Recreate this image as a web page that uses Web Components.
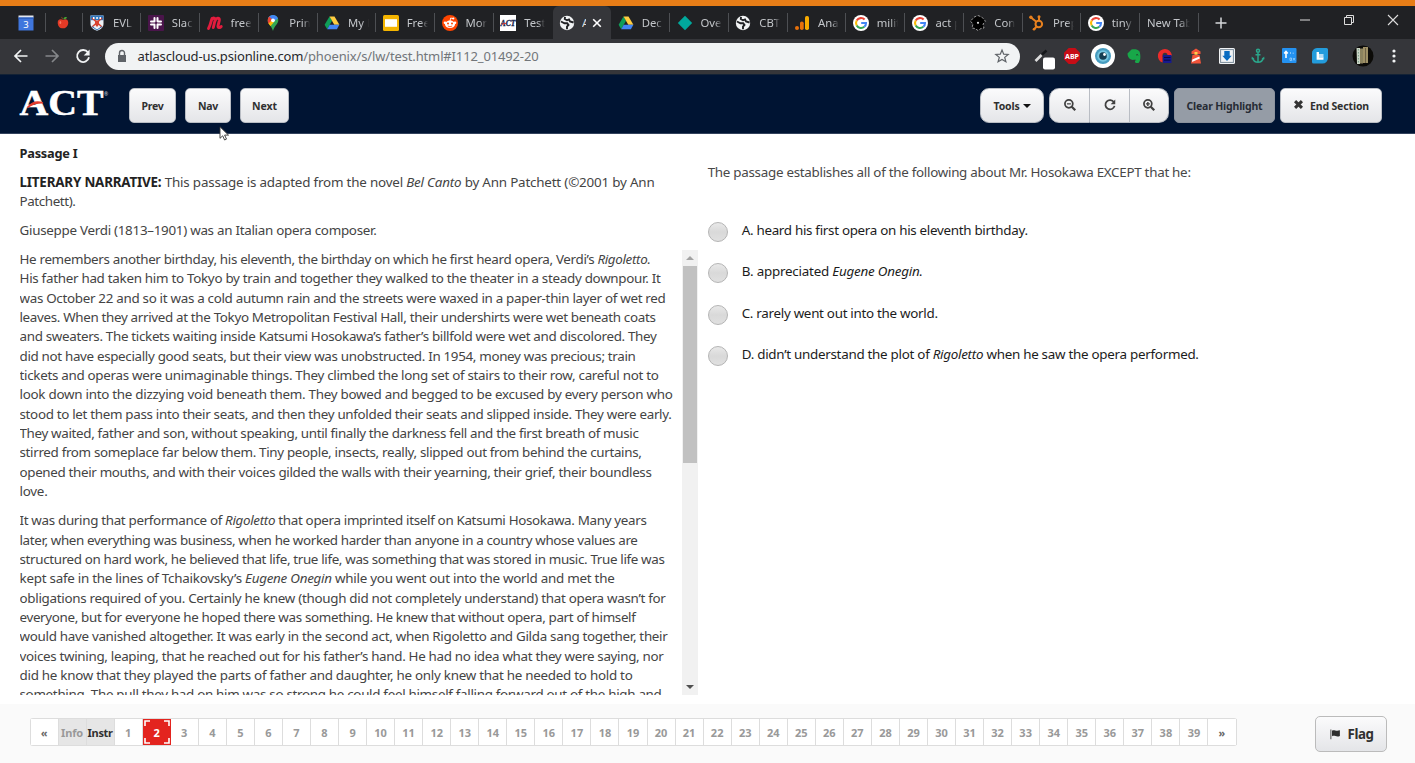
<!DOCTYPE html>
<html lang="en">
<head>
<meta charset="utf-8">
<title>ACT Test</title>
<style>
html,body{margin:0;height:100%;overflow:hidden;background:#fff;font-family:"Noto Sans","Open Sans",sans-serif}
</style>
</head>
<body>
<exam-window></exam-window>
<script>
const define=(name,html,init)=>{
  const t=document.createElement('template');
  t.innerHTML=html;
  customElements.define(name,class extends HTMLElement{
    connectedCallback(){
      if(this.shadowRoot)return;
      this.attachShadow({mode:'open'}).append(t.content.cloneNode(true));
      if(init)init(this,this.shadowRoot);
    }
  });
};

/* A single line of text, tracked to fill the width in its "w" attribute. */
define('text-line',`<style>:host{display:block;white-space:nowrap}span{display:inline-block}</style><span><slot></slot></span>`,(el,r)=>{
  const w=+el.getAttribute('w');
  if(!w)return;
  const s=r.querySelector('span'),n=el.textContent.length;
  s.style.letterSpacing=((w-s.getBoundingClientRect().width)/n).toFixed(4)+'px';
});

const globe='<circle cx="8" cy="8" r="7.2" fill="#f1f3f4"/><path d="M2 6.5 5.5 8.3 8.2 8.3 9.5 10 8 11.7 8 14.2M6 1.8 5.8 4 8 5.3 10 4.4 11 6.4 14.6 7.5" fill="none" stroke="#202124" stroke-width="1.9"/>';
const goog='<circle cx="8" cy="8" r="8" fill="#fff"/><g fill="none" stroke-width="2.1"><path d="M11.6 4.6A5 5 0 0 0 3.7 5.5" stroke="#ea4335"/><path d="M3.7 5.5A5 5 0 0 0 3.7 10.5" stroke="#fbbc05"/><path d="M3.7 10.5A5 5 0 0 0 11.3 11.8" stroke="#34a853"/><path d="M11.3 11.8A5 5 0 0 0 13 8H8.2" stroke="#4285f4"/></g>';
const drive='<path d="M5.5 1.5 8 5.8 3.2 14.2.6 9.8z" fill="#0f9d58"/><path d="M5.5 1.5H10.5L15.4 9.8H10.3z" fill="#ffcd40"/><path d="M5.7 9.8H15.4L12.9 14.2H3.2z" fill="#4285f4"/>';
const ICONS={
 cal:'<path d="M.5 2h15v13.5H.5z" fill="#3f76dd"/><path d="M.5.5h15v2H.5z" fill="#e2e7ef"/><path d="M.5 2.5h15v1.3H.5z" fill="#2a5bb8"/><text x="8" y="12.6" font-size="9.5" fill="#fff" text-anchor="middle" font-family="Noto Sans">3</text>',
 apple:'<path d="M8 5C4.5 3.3 1.5 5 2 9c.4 3.8 3.3 6.5 6 5.5 3 .8 6-2.6 6-6.200C14 4.500 11 3.500 8 5z" fill="#e33a26"/><path d="M8.200 5.200C8 3.500 7 2.500 6 2" stroke="#70401f" fill="none" stroke-width="1.200"/><path d="M8.500 4C9 2 11 1.300 12.500 2.200 11.800 4 10 4.500 8.500 4z" fill="#46a335"/><ellipse cx="5" cy="8" rx="1" ry="1.800" fill="#f77a62"/>',
 crest:'<path d="M1.500.5h13v8.500c0 3.500-3 5.500-6.500 6.700C4.500 14.500 1.500 12.500 1.500 9z" fill="#eef1f5"/><path d="M1.500.5h13v4.700h-13z" fill="#2f75bd"/><path d="m3 3 10 9M13 3 3 12" stroke="#d9432f" stroke-width="1.500"/><path d="M6 5.500h4v4L8 12 6 9.500z" fill="#d9432f"/><path d="M4 2h1.500v2H4zM7.300 2h1.500v2H7.300zM10.500 2H12v2h-1.500z" fill="#fff"/><path d="M3 11.500 8 15l5-3.500" fill="none" stroke="#2f75bd"/>',
 slack:'<rect width="16" height="16" rx="1" fill="#4a154b"/><g stroke="#fff" stroke-width="2" stroke-linecap="round"><path d="M6.500 3v3.500M9.500 3v3.200M6.500 9.700V13M9.500 9.500V13M3 6.500h3.200M9.700 6.500H13M3 9.500h3.500M9.700 9.500H13"/></g>',
 m:'<path d="M1.500 13.500C3.500 10 4 6 5 3.500M5.200 4C6 2.500 8.500 2.500 8 5.500L6.300 12.500M8 6C9 2.500 13 2 12.300 5.500L11 11c-.3 2 2 2 3.200.5" fill="none" stroke="#e31c3e" stroke-width="2.900" stroke-linecap="round"/>',
 pin:'<path d="M8 0a5.300 5.300 0 0 1 5.300 5.300C13.300 9 9.200 11 8 16 6.800 11 2.700 9 2.700 5.300A5.300 5.300 0 0 1 8 0z" fill="#34a853"/><path d="M8 0a5.300 5.300 0 0 1 5 3.500L8 7 3 3.500A5.300 5.300 0 0 1 8 0z" fill="#4285f4"/><path d="M4.300 1.500 8 5.300 4.200 9.500C3 8 2.700 7 2.700 5.300a5.300 5.300 0 0 1 1.600-3.800z" fill="#ea4335"/><path d="M3.500 8.500 7 5l2 2-3.500 4.300z" fill="#fbbc04"/><circle cx="8" cy="5.300" r="1.900" fill="#fff"/>',
 drive,globe,goog,
 slides:'<rect width="16" height="16" rx="1.500" fill="#f4b400"/><path d="M2 4.200h12v7.600H2z" fill="#fff"/>',
 reddit:'<circle cx="8" cy="8" r="8" fill="#ff4500"/><ellipse cx="8" cy="9.300" rx="5" ry="3.700" fill="#fff"/><circle cx="3" cy="7.700" r="1.300" fill="#fff"/><circle cx="13" cy="7.700" r="1.300" fill="#fff"/><path d="m8 6 .7-3 2.300.6" stroke="#fff" fill="none" stroke-width=".9"/><circle cx="11.300" cy="3.500" r="1.100" fill="#fff"/><circle cx="6" cy="8.600" r="1" fill="#ff4500"/><circle cx="10" cy="8.600" r="1" fill="#ff4500"/><path d="M5.800 11q2.200 1.500 4.400 0" stroke="#ff4500" fill="none" stroke-width=".8"/>',
 act:'<rect width="16" height="16" fill="#fff"/><text x=".6" y="10.600" font-size="7.500" font-weight="bold" font-style="italic" font-family="Liberation Serif" fill="#17254c" stroke="#17254c" stroke-width=".3" textLength="14.800" lengthAdjust="spacingAndGlyphs">ACT</text><path d="M2 9.500q2-1.700 4-1" stroke="#d33" fill="none"/>',
 diamond:'<path d="M8 .8 15.200 8 8 15.200.8 8z" fill="#00a99d"/>',
 bars:'<circle cx="3" cy="13" r="2" fill="#e8710a"/><rect x="6" y="6.500" width="3.700" height="8.500" rx="1.800" fill="#e8710a"/><rect x="11" y="1" width="4" height="14" rx="1.700" fill="#f9ab00"/>',
 college:'<path d="m8 .5 4 1.700 3.500 4L13 9l1 4-3 .5L8 15.500 5 13.500 2 13l1-4L.5 6.200l3.500-4z" fill="#000" stroke="#bbb" stroke-width=".8" stroke-dasharray="2.500 1.500"/><circle cx="8" cy="7.800" r="1.100" fill="#ddd"/>',
 hub:'<g fill="none" stroke="#e8811f" stroke-width="2"><circle cx="9.800" cy="9" r="3.300"/><path d="M10 5.500V2M7.300 6.800 2 2.500M7.500 11.500 5 14.500"/></g><g fill="#e8811f"><circle cx="10" cy="1.800" r="1.500"/><circle cx="1.900" cy="2.200" r="1.700"/><circle cx="5" cy="14.300" r="1.300"/></g>',
 close:'<path d="m4.200 4.200 7.600 7.600M11.800 4.200l-7.600 7.600" stroke="#fff" stroke-width="1.600"/>',
 plus:'<path d="M8 2.500v11M2.500 8h11" stroke="#d5d7da" stroke-width="1.500"/>',
 min:'<path d="M3 8h10" stroke="#ddd"/>',
 max:'<path d="M3.500 5.500h7v7h-7zM5.500 5.500v-2h7v7h-2" fill="none" stroke="#ddd"/>',
 x:'<path d="m3 3 10 10M13 3 3 13" stroke="#ddd" stroke-width="1.100"/>',
 back:'<path d="M14.500 8H2.500M8 2 2 8l6 6" fill="none" stroke="#f1f3f4" stroke-width="1.700"/>',
 fwd:'<path d="M1.500 8h12M8 2l6 6-6 6" fill="none" stroke="#85878a" stroke-width="1.700"/>',
 reload:'<path d="M13 4.500A6 6 0 1 0 14 9.300" fill="none" stroke="#f1f3f4" stroke-width="1.800"/><path d="M14.600 1.500v6H8.700z" fill="#f1f3f4"/>',
 lock:'<path d="M4 7h8v7H4z" fill="#5f6368"/><path d="M5.500 7V5a2.500 2.500 0 0 1 5 0v2" fill="none" stroke="#5f6368" stroke-width="1.400"/>',
 star:'<path d="m8 2 1.700 4.200 4.500.3-3.500 2.900 1.200 4.400L8 11.400l-3.900 2.400 1.200-4.400L1.800 6.500l4.500-.3z" fill="none" stroke="#5f6368" stroke-width="1.200"/>',
 pick:'<path d="m2.500 13 6-6" stroke="#ddd" stroke-width="2.600"/><path d="m9 6.500 4.500-4" stroke="#15171a" stroke-width="2.500"/><rect x="10" y="9.500" width="12" height="12" rx="2" fill="#fff"/>',
 abp:'<path d="M4.700 0h6.600L16 4.700v6.600L11.300 16H4.700L0 11.300V4.700z" fill="#c70d16"/><text x="8" y="10.800" text-anchor="middle" font-size="7.600" font-weight="bold" font-family="Noto Sans" fill="#fff" textLength="14" lengthAdjust="spacingAndGlyphs">ABP</text>',
 eye:'<circle cx="8" cy="8" r="12" fill="#fff"/><circle cx="8" cy="8" r="8" fill="#469cc0"/><circle cx="8" cy="8" r="5.800" fill="#76c5df"/><circle cx="8" cy="8" r="3.800" fill="#173d52"/><circle cx="9.500" cy="6.500" r="1.400" fill="#fff"/>',
 ever:'<path d="M1.500 5.500 5.500 1.500C8.500 1 12 1.300 13.500 3.500c1.500 4 1 10-1 11.500H9.800c-1.500-1-1-3 .7-3l.5.9c-1.800-2.400-3.500 0-6-1.400C2.500 10.500 1.500 8 1.500 5.500z" fill="#18a849"/><path d="M10.200 7q1-1 2 .3" fill="none" stroke="#26332c"/>',
 red:'<path d="M14.800 7A7 7 0 1 0 5.500 14.500V8h9z" fill="#ed2b2b"/><circle cx="8" cy="7.200" r="2.500" fill="#35363a"/><path d="M6 7h8.500v8H6z" fill="#171a8e"/><path d="M7 9.500h6.500M7 12.200h6.500" stroke="#080a43"/>',
 house:'<path d="m8 .5 4.500 3V6h-9V3.500z" fill="#f2543a"/><path d="M4.500 6.700h7L13 15.500H3z" fill="#f2543a"/><path d="m4.300 11.500 7-3 .5 2-7.800 3.500z" fill="#fff"/><path d="M6.500 4h3v2.700h-3z" fill="#ffd04a"/>',
 down:'<rect width="16" height="16" rx="1.500" fill="#f1f3f5"/><rect x="1.600" y="1.600" width="12.800" height="12.800" fill="none" stroke="#7b8c9b"/><path d="M5.300 3h5.400v4.700h2L8 13 3.300 7.700h2z" fill="#086bc1"/>',
 anchor:'<g fill="none" stroke="#2ba68b" stroke-width="1.500"><circle cx="8" cy="2.700" r="1.500"/><path d="M8 4.500V14.500M5.500 6.700h5M2.700 10c.7 3 2.700 4.300 5.300 4.300s4.600-1.300 5.300-4.300"/></g><path d="M1.800 8.500 4.800 11.200H1.500zM14.200 8.500 11.200 11.200h3.300z" fill="#2ba68b"/>',
 ext:'<rect x="1" width="14.500" height="15" rx="1" fill="#2492f1"/><path d="M5 10V4M3.200 5.500 5 3.500l1.800 2" fill="none" stroke="#fff" stroke-width="1.600"/><path d="M9.500 4v2M11.500 5.200h1.500M9 10h1.500v2.500H9zM12 10l2 2.500m0-2.500-2 2.500" stroke="#9ed1fb" stroke-width=".8" fill="none"/>',
 blue:'<path d="M5 0h9.500A1.500 1.500 0 0 1 16 1.500V10a5.500 5.500 0 0 1-5.500 5.500H1.500A1.500 1.500 0 0 1 0 14V5.500A5 5 0 0 1 5 0z" fill="#239cdc"/><path d="M5.800 4v6.500H11.500" stroke="#fff" stroke-width="2.400" fill="none"/><path d="M7 6h4.500v3.500H7z" fill="#b6def4"/>',
 face:'<circle cx="8" cy="8" r="10.500" fill="#0c0b08"/><path d="M1.500 0H5v16H2z" fill="#c9d3c3"/><path d="M5 .5h3v15H5z" fill="#8c835f"/><path d="M8-1h5v16H8z" fill="#9f9167"/><path d="M10.500 0v15" stroke="#6c6045"/><path d="M3.400 1v14" stroke="#7c9d88" stroke-dasharray="1.500 1.500"/>',
 dots:'<g fill="#f1f3f4"><circle cx="8" cy="3" r="1.600"/><circle cx="8" cy="8" r="1.600"/><circle cx="8" cy="13" r="1.600"/></g>',
 zout:'<circle cx="6.700" cy="6.700" r="4.500" fill="none" stroke="#404040" stroke-width="2"/><path d="m10 10 4 4" stroke="#404040" stroke-width="2.600"/><path d="M4.500 6.700H9" stroke="#404040" stroke-width="1.400"/>',
 zin:'<circle cx="6.700" cy="6.700" r="4.500" fill="none" stroke="#404040" stroke-width="2"/><path d="m10 10 4 4" stroke="#404040" stroke-width="2.600"/><path d="M4.500 6.700H9M6.700 4.500V9" stroke="#404040" stroke-width="1.600"/>',
 redo:'<path d="M12.500 4.800A5.300 5.300 0 1 0 13.200 9" fill="none" stroke="#404040" stroke-width="2"/><path d="M14 1.800V7H8.800z" fill="#404040"/>',
 cross:'<path d="m3 3 10 10M13 3 3 13" stroke="#333" stroke-width="4.400"/>',
 flag:'<path d="M2.500 2v13" stroke="#555" stroke-width="1.400"/><path d="M4 3.500c3-2 5 1.500 10.500-.5v7.500c-4.500 2.500-7-1.500-10.500.5z" fill="#2d2d2d"/>'
};
define('app-icon',`<style>:host{display:block;width:16px;height:16px;flex:none}svg{display:block;width:100%;height:100%;overflow:visible}</style><svg viewBox="0 0 16 16"></svg>`,(el,r)=>{
  r.querySelector('svg').innerHTML=ICONS[el.getAttribute('name')];
});

define('browser-tab',`<style>
:host{display:flex;align-items:center;box-sizing:border-box;flex:none;width:58.750px;height:33px;padding-left:6.500px;position:relative;color:#c3c6ca;font-size:11.300px}
:host([pinned]){width:36.500px}
:host([plain]){padding-left:7px}
:host::after{content:"";position:absolute;right:0;top:7px;width:1px;height:19px;background:#4d4f53}
:host([active]){background:#35363a;border-radius:6px 6px 0 0;color:#ddd}
:host([active])::after,:host([before])::after{display:none}
.l{width:21px;margin-left:8px;margin-top:-1px;overflow:hidden;white-space:nowrap;-webkit-mask:linear-gradient(90deg,#000 65%,transparent)}
:host([plain]) .l{width:43px;margin-left:0;-webkit-mask:linear-gradient(90deg,#000 75%,transparent)}
:host([active]) .l{width:4px;margin-left:7px;-webkit-mask:none}
:host([pinned]) .l{display:none}
</style><slot name="icon"></slot><div class="l"><slot></slot></div><slot name="end"></slot>`);

const tabs=[['crest','EVL'],['slack','Slack'],['m','free'],['pin','Print'],['drive','My D'],['slides','Free'],['reddit','Mor'],['act','Test','before'],['globe','A','active'],['drive','Dec'],['diamond','Ove'],['globe','CBT'],['bars','Ana'],['goog','milit'],['goog','act p'],['college','Con'],['hub','Prep'],['goog','tiny']];
define('tab-strip',`<style>:host{display:flex;height:33px;background:#202124;border-top:6px solid #e77d17;padding-left:9.500px;align-items:center}
.plus{margin-left:14px}.win{margin-left:auto;display:flex;gap:28px;padding-right:14px;margin-top:-5px}</style>
<browser-tab pinned style="padding-left:8.500px"><app-icon slot="icon" name="cal"></app-icon></browser-tab><browser-tab pinned style="padding-left:9.500px"><app-icon slot="icon" name="apple" style="width:14px;height:15px"></app-icon></browser-tab>
${tabs.map(([i,t,f])=>`<browser-tab ${f||''}><app-icon slot="icon" name="${i}"></app-icon>${t}${f=='active'?'<app-icon slot="end" name="close" style="margin-left:3px"></app-icon>':''}</browser-tab>`).join('')}
<browser-tab plain>New Tab</browser-tab><app-icon class="plus" name="plus"></app-icon>
<div class="win"><app-icon name="min"></app-icon><app-icon name="max"></app-icon><app-icon name="x"></app-icon></div>`);

define('address-bar',`<style>:host{display:flex;height:35px;background:#35363a;align-items:center;box-sizing:border-box;padding:0 13px 1px}
.nav{display:flex;gap:15px;width:92px;flex:none}
.box{display:flex;align-items:center;box-sizing:border-box;width:915px;height:27px;border-radius:14px;background:#f1f3f4;padding:0 10px 0 9px;font-size:13px;color:#72767a;flex:none}
.box text-line{margin-left:7.500px;flex:1;line-height:20px}b{font-weight:400;color:#25272a}
.ext{display:flex;gap:15px;margin-left:13px}.sep{width:1px;height:15px;background:#5b5d61;margin-left:13px}.face{margin-left:14px}.dots{margin-left:15px}</style>
<div class="nav"><app-icon name="back"></app-icon><app-icon name="fwd"></app-icon><app-icon name="reload"></app-icon></div>
<div class="box"><app-icon name="lock"></app-icon><text-line w="401"><b>atlascloud-us.psionline.com</b>/phoenix/s/lw/test.html#I112_01492-20</text-line><app-icon name="star"></app-icon></div>
<div class="ext">${['pick','abp','eye','ever','red','house','down','anchor','ext','blue'].map(n=>`<app-icon name="${n}"></app-icon>`).join('')}</div><div class="sep"></div><app-icon class="face" name="face"></app-icon><app-icon class="dots" name="dots"></app-icon>`);

define('push-button',`<style>:host{display:flex;align-items:center;justify-content:center;box-sizing:border-box;height:35px;border:1px solid #b9bdc4;border-radius:5px;background:linear-gradient(#fbfbfc,#e4e5e8);color:#303030;font-size:10.500px;font-weight:700;flex:none}
:host([off]){background:#959ca6;border-color:#8b929d;color:#272c35}</style><slot></slot>`);

define('exam-header',`<style>:host{display:flex;box-sizing:border-box;height:60px;background:#001433;border-top:1px solid #132235;border-bottom:1px solid #32425c;padding:13px 33px 0 19px;align-items:flex-start}
.logo{width:110px;height:35px;flex:none;overflow:visible}
.left{display:flex;gap:9px}.right{display:flex;margin-left:auto;gap:5px}
.grp{display:flex}.grp push-button{width:40px;border-radius:0}.grp push-button+push-button{border-left:0}
.grp push-button:first-child{border-radius:10px 0 0 10px;width:41px}.grp push-button:last-child{border-radius:0 10px 10px 0;width:39px}
.car{border:4px solid transparent;border-top-color:#111;border-bottom:0;margin-left:3px}
.grp app-icon{width:14px;height:14px;margin-top:-2px}</style>
<svg class="logo" viewBox="0 0 110 35"><text x=".5" y="27" font-family="Liberation Serif" font-weight="700" font-size="35" fill="#fff" stroke="#fff" stroke-width=".5" textLength="84" lengthAdjust="spacingAndGlyphs">ACT</text><path d="M8.500 19.500Q15 11.500 24 15q-8-.5-15.500 4.500z" fill="#e23b2e" stroke="#e23b2e" stroke-width="1.300"/><text x="85" y="8" font-size="5" font-family="Noto Sans" fill="#ccd">®</text></svg>
<div class="left"><push-button style="width:47px"><text-line w="22">Prev</text-line></push-button><push-button style="width:46px"><text-line w="20">Nav</text-line></push-button><push-button style="width:49px"><text-line w="25">Next</text-line></push-button></div>
<div class="right"><push-button style="width:64px;border-radius:9px"><text-line w="26">Tools</text-line><i class="car"></i></push-button>
<div class="grp"><push-button><app-icon name="zout"></app-icon></push-button><push-button><app-icon name="redo"></app-icon></push-button><push-button><app-icon name="zin"></app-icon></push-button></div>
<push-button off style="width:101px"><text-line w="76">Clear Highlight</text-line></push-button><push-button style="width:102px"><app-icon name="cross" style="width:11px;height:11px;margin:-3px 6px 0 0"></app-icon><text-line w="59">End Section</text-line></push-button></div>`);

const p1=[[631,'He remembers another birthday, his eleventh, the birthday on which he first heard opera, Verdi’s <i>Rigoletto.</i>'],[641,'His father had taken him to Tokyo by train and together they walked to the theater in a steady downpour. It'],[646,'was October 22 and so it was a cold autumn rain and the streets were waxed in a paper-thin layer of wet red'],[636,'leaves. When they arrived at the Tokyo Metropolitan Festival Hall, their undershirts were wet beneath coats'],[637,'and sweaters. The tickets waiting inside Katsumi Hosokawa’s father’s billfold were wet and discolored. They'],[616,'did not have especially good seats, but their view was unobstructed. In 1954, money was precious; train'],[639,'tickets and operas were unimaginable things. They climbed the long set of stairs to their row, careful not to'],[653,'look down into the dizzying void beneath them. They bowed and begged to be excused by every person who'],[652,'stood to let them pass into their seats, and then they unfolded their seats and slipped inside. They were early.'],[619,'They waited, father and son, without speaking, until finally the darkness fell and the first breath of music'],[622,'stirred from someplace far below them. Tiny people, insects, really, slipped out from behind the curtains,'],[632,'opened their mouths, and with their voices gilded the walls with their yearning, their grief, their boundless'],[28,'love.']];
const p2=[[627,'It was during that performance of <i>Rigoletto</i> that opera imprinted itself on Katsumi Hosokawa. Many years'],[618,'later, when everything was business, when he worked harder than anyone in a country whose values are'],[645,'structured on hard work, he believed that life, true life, was something that was stored in music. True life was'],[595,'kept safe in the lines of Tchaikovsky’s <i>Eugene Onegin</i> while you went out into the world and met the'],[646,'obligations required of you. Certainly he knew (though did not completely understand) that opera wasn’t for'],[616,'everyone, but for everyone he hoped there was something. He knew that without opera, part of himself'],[648,'would have vanished altogether. It was early in the second act, when Rigoletto and Gilda sang together, their'],[644,'voices twining, leaping, that he reached out for his father’s hand. He had no idea what they were saying, nor'],[613,'did he know that they played the parts of father and daughter, he only knew that he needed to hold to'],[642,'something. The pull they had on him was so strong he could feel himself falling forward out of the high and']];
const lines=a=>a.map(([w,t])=>`<text-line w="${w}">${t}</text-line>`).join('');

define('scroll-bar',`<style>:host{display:flex;flex-direction:column;width:16px;background:#f1f1f1;align-items:center;flex:none}
.u,.d{height:16px;display:flex;align-items:center}.u i{border:4px solid transparent;border-top:0;border-bottom-color:#a3a3a3}.d i{border:4px solid transparent;border-bottom:0;border-top-color:#505050}
.t{width:14px;height:197px;background:#c1c1c1}.d{margin-top:auto}</style><div class="u"><i></i></div><div class="t"></div><div class="d"><i></i></div>`);

define('reading-passage',`<style>:host{display:block;box-sizing:border-box;width:698px;height:570px;padding:10px 0 0 19.500px;font-size:13.400px;line-height:19.340px;color:#444}
b{color:#222}.h{font-size:12.800px}.g{margin-bottom:9.700px}.row{display:flex;justify-content:space-between;height:445px;margin-top:-.4px}.txt{overflow:hidden;width:658px}</style>
<text-line class="g h" w="58"><b>Passage I</b></text-line>
<text-line w="635"><b>LITERARY NARRATIVE:</b> This passage is adapted from the novel <i>Bel Canto</i> by Ann Patchett (©2001 by Ann</text-line>
<text-line class="g" w="56">Patchett).</text-line>
<text-line class="g" w="357">Giuseppe Verdi (1813–1901) was an Italian opera composer.</text-line>
<div class="row"><div class="txt"><div class="g">${lines(p1)}</div><div>${lines(p2)}</div></div><scroll-bar></scroll-bar></div>`);

define('answer-option',`<style>:host{display:flex;align-items:flex-start;height:41.400px;color:#1c1c1c}
.r{width:20px;height:20px;box-sizing:border-box;border:1px solid #b5b5b5;border-radius:50%;background:linear-gradient(#e8e8e8,#d9d9d9 50%,#e0e0e0);margin:1px 14px 0 0;flex:none}</style><div class="r"></div><slot></slot>`);

define('question-panel',`<style>:host{display:block;padding:29px 0 0 9.700px;font-size:13.400px;line-height:19.340px;color:#484848}.q{margin-bottom:38.500px}</style>
<text-line class="q" w="483">The passage establishes all of the following about Mr. Hosokawa EXCEPT that he:</text-line>
<answer-option><text-line w="286">A. heard his first opera on his eleventh birthday.</text-line></answer-option>
<answer-option><text-line w="181">B. appreciated <i>Eugene Onegin.</i></text-line></answer-option>
<answer-option><text-line w="196">C. rarely went out into the world.</text-line></answer-option>
<answer-option><text-line w="457">D. didn’t understand the plot of <i>Rigoletto</i> when he saw the opera performed.</text-line></answer-option>`);

define('page-cell',`<style>:host{display:flex;align-items:center;justify-content:center;box-sizing:border-box;width:28.050px;height:26px;border-right:1px solid #ddd;font-size:11px;font-weight:700;color:#999;background:#fff;flex:none;position:relative}
:host([arrow]){color:#666}:host([info]){background:#e6e6e6;color:#999}:host([instr]){background:#e6e6e6;color:#303030}
:host([on]){background:#e3241f;color:#fff;border:0}
svg{display:none}:host([on]) svg{display:block;position:absolute;left:1px;top:1px;width:26px;height:24px}</style><slot></slot><svg viewBox="0 0 26 24"><path d="M1 6V1h5M20 1h5v5M25 18v5h-5M6 23H1v-5" fill="none" stroke="#fff" stroke-width="1.600"/></svg>`);

define('exam-footer',`<style>:host{display:flex;box-sizing:border-box;height:59px;background:#fafafa;padding:0 28px 0 29.500px;align-items:flex-start;justify-content:space-between}
.p{display:flex;border:1px solid #ddd;border-right:0;border-radius:3px;margin-top:14px}
push-button{width:72px;height:36px;font-size:13.300px;margin-top:12px;border-color:#bbb}</style>
<div class="p"><page-cell arrow>«</page-cell><page-cell info><text-line w="22">Info</text-line></page-cell><page-cell instr><text-line w="25">Instr</text-line></page-cell>${Array.from({length:39},(_,i)=>`<page-cell ${i==1?'on':''}>${i+1}</page-cell>`).join('')}<page-cell arrow>»</page-cell></div>
<push-button><app-icon name="flag" style="width:12px;height:12px;margin-right:7px"></app-icon><text-line w="26">Flag</text-line></push-button>`);

define('exam-window',`<style>:host{display:flex;flex-direction:column;width:1415px;height:763px;overflow:hidden}
main{display:flex;height:570px}.cur{position:absolute;left:219px;top:126px;width:11px;height:15px}</style>
<tab-strip></tab-strip><address-bar></address-bar><exam-header></exam-header>
<main><reading-passage></reading-passage><question-panel></question-panel></main><exam-footer></exam-footer>
<svg class="cur" viewBox="0 0 11 15"><path d="M1 .8v11.500l2.700-2.500 1.900 4.200 1.900-.9-1.900-4H9.500z" fill="#fff" stroke="#333" stroke-width=".9"/></svg>`);
</script>
</body>
</html>
